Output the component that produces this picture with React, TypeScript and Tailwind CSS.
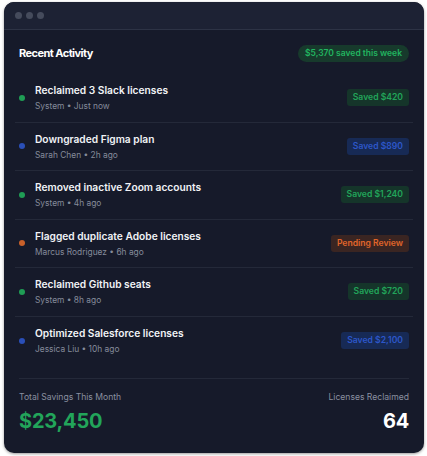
import React from "react";

type Row = {
  title: string;
  sub: string;
  dot: string;
  badge: string;
  badgeCls: string;
};

const rows: Row[] = [
  { title: "Reclaimed 3 Slack licenses", sub: "System • Just now", dot: "bg-[#1f9d55]", badge: "Saved $420", badgeCls: "bg-[#15352a] text-[#22a55a]" },
  { title: "Downgraded Figma plan", sub: "Sarah Chen • 2h ago", dot: "bg-[#2a4fb8]", badge: "Saved $890", badgeCls: "bg-[#172a55] text-[#2d57c9]" },
  { title: "Removed inactive Zoom accounts", sub: "System • 4h ago", dot: "bg-[#1f9d55]", badge: "Saved $1,240", badgeCls: "bg-[#15352a] text-[#22a55a]" },
  { title: "Flagged duplicate Adobe licenses", sub: "Marcus Rodriguez • 6h ago", dot: "bg-[#c8602a]", badge: "Pending Review", badgeCls: "bg-[#3a2522] text-[#e0652a]" },
  { title: "Reclaimed Github seats", sub: "System • 8h ago", dot: "bg-[#1f9d55]", badge: "Saved $720", badgeCls: "bg-[#15352a] text-[#22a55a]" },
  { title: "Optimized Salesforce licenses", sub: "Jessica Liu • 10h ago", dot: "bg-[#2a4fb8]", badge: "Saved $2,100", badgeCls: "bg-[#172a55] text-[#2d57c9]" },
];

export default function App() {
  return (
    <div className="w-[427px] h-[456px] bg-white pl-[4px] pt-[2px]" style={{ fontFamily: "Inter, 'Noto Sans', sans-serif" }}>
      <div className="w-[420px] h-[451px] rounded-[10px] bg-[#161a2a] overflow-hidden flex flex-col shadow-[0_1px_3px_rgba(0,0,0,0.4)]">
        <div className="h-[28px] bg-[#1d2234] border-b border-[#2d3345] flex items-center gap-[4px] pl-[11px] shrink-0">
          <span className="w-[7px] h-[7px] rounded-full bg-[#454b5c]" />
          <span className="w-[7px] h-[7px] rounded-full bg-[#454b5c]" />
          <span className="w-[7px] h-[7px] rounded-full bg-[#454b5c]" />
        </div>
        <div className="px-[15px] pt-[15px] flex flex-col flex-1">
          <div className="flex items-center justify-between h-[17px]">
            <div className="text-[11px] font-bold tracking-[-0.05em] text-white">Recent Activity</div>
            <div className="h-[17px] px-[7px] rounded-full bg-[#173a2c] text-[#22b560] text-[8.5px] font-semibold flex items-center">$5,370 saved this week</div>
          </div>
          <div className="mt-[12px] mx-[-4px] flex flex-col">
            {rows.map((r, i) => (
              <div key={i} className={`flex items-center px-[4px] h-[48.5px] ${i < rows.length - 1 ? "border-b border-[#242939]" : ""}`}>
                <span className={`w-[6px] h-[6px] rounded-full ${r.dot} shrink-0`} />
                <div className="ml-[10px] flex flex-col flex-1">
                  <div className="text-[10.2px] leading-[15px] font-semibold text-[#f1f3f6]">{r.title}</div>
                  <div className="mt-[2px] text-[8.4px] leading-[12px] text-[#858b9a]">{r.sub}</div>
                </div>
                <div className={`h-[17px] px-[6px] rounded-[3px] text-[8.6px] font-semibold flex items-center ${r.badgeCls}`}>{r.badge}</div>
              </div>
            ))}
          </div>
          <div className="mt-[13px] border-t border-[#242939] pt-[12px] flex justify-between">
            <div className="flex flex-col">
              <div className="text-[8.6px] leading-[12px] text-[#8a90a0]">Total Savings This Month</div>
              <div className="mt-[5px] text-[20px] leading-[26px] font-bold tracking-[-0.01em] text-[#22a55a]">$23,450</div>
            </div>
            <div className="flex flex-col items-end">
              <div className="text-[8.6px] leading-[12px] text-[#8a90a0]">Licenses Reclaimed</div>
              <div className="mt-[5px] text-[20px] leading-[26px] font-bold tracking-[-0.01em] text-white">64</div>
            </div>
          </div>
        </div>
      </div>
    </div>
  );
}
